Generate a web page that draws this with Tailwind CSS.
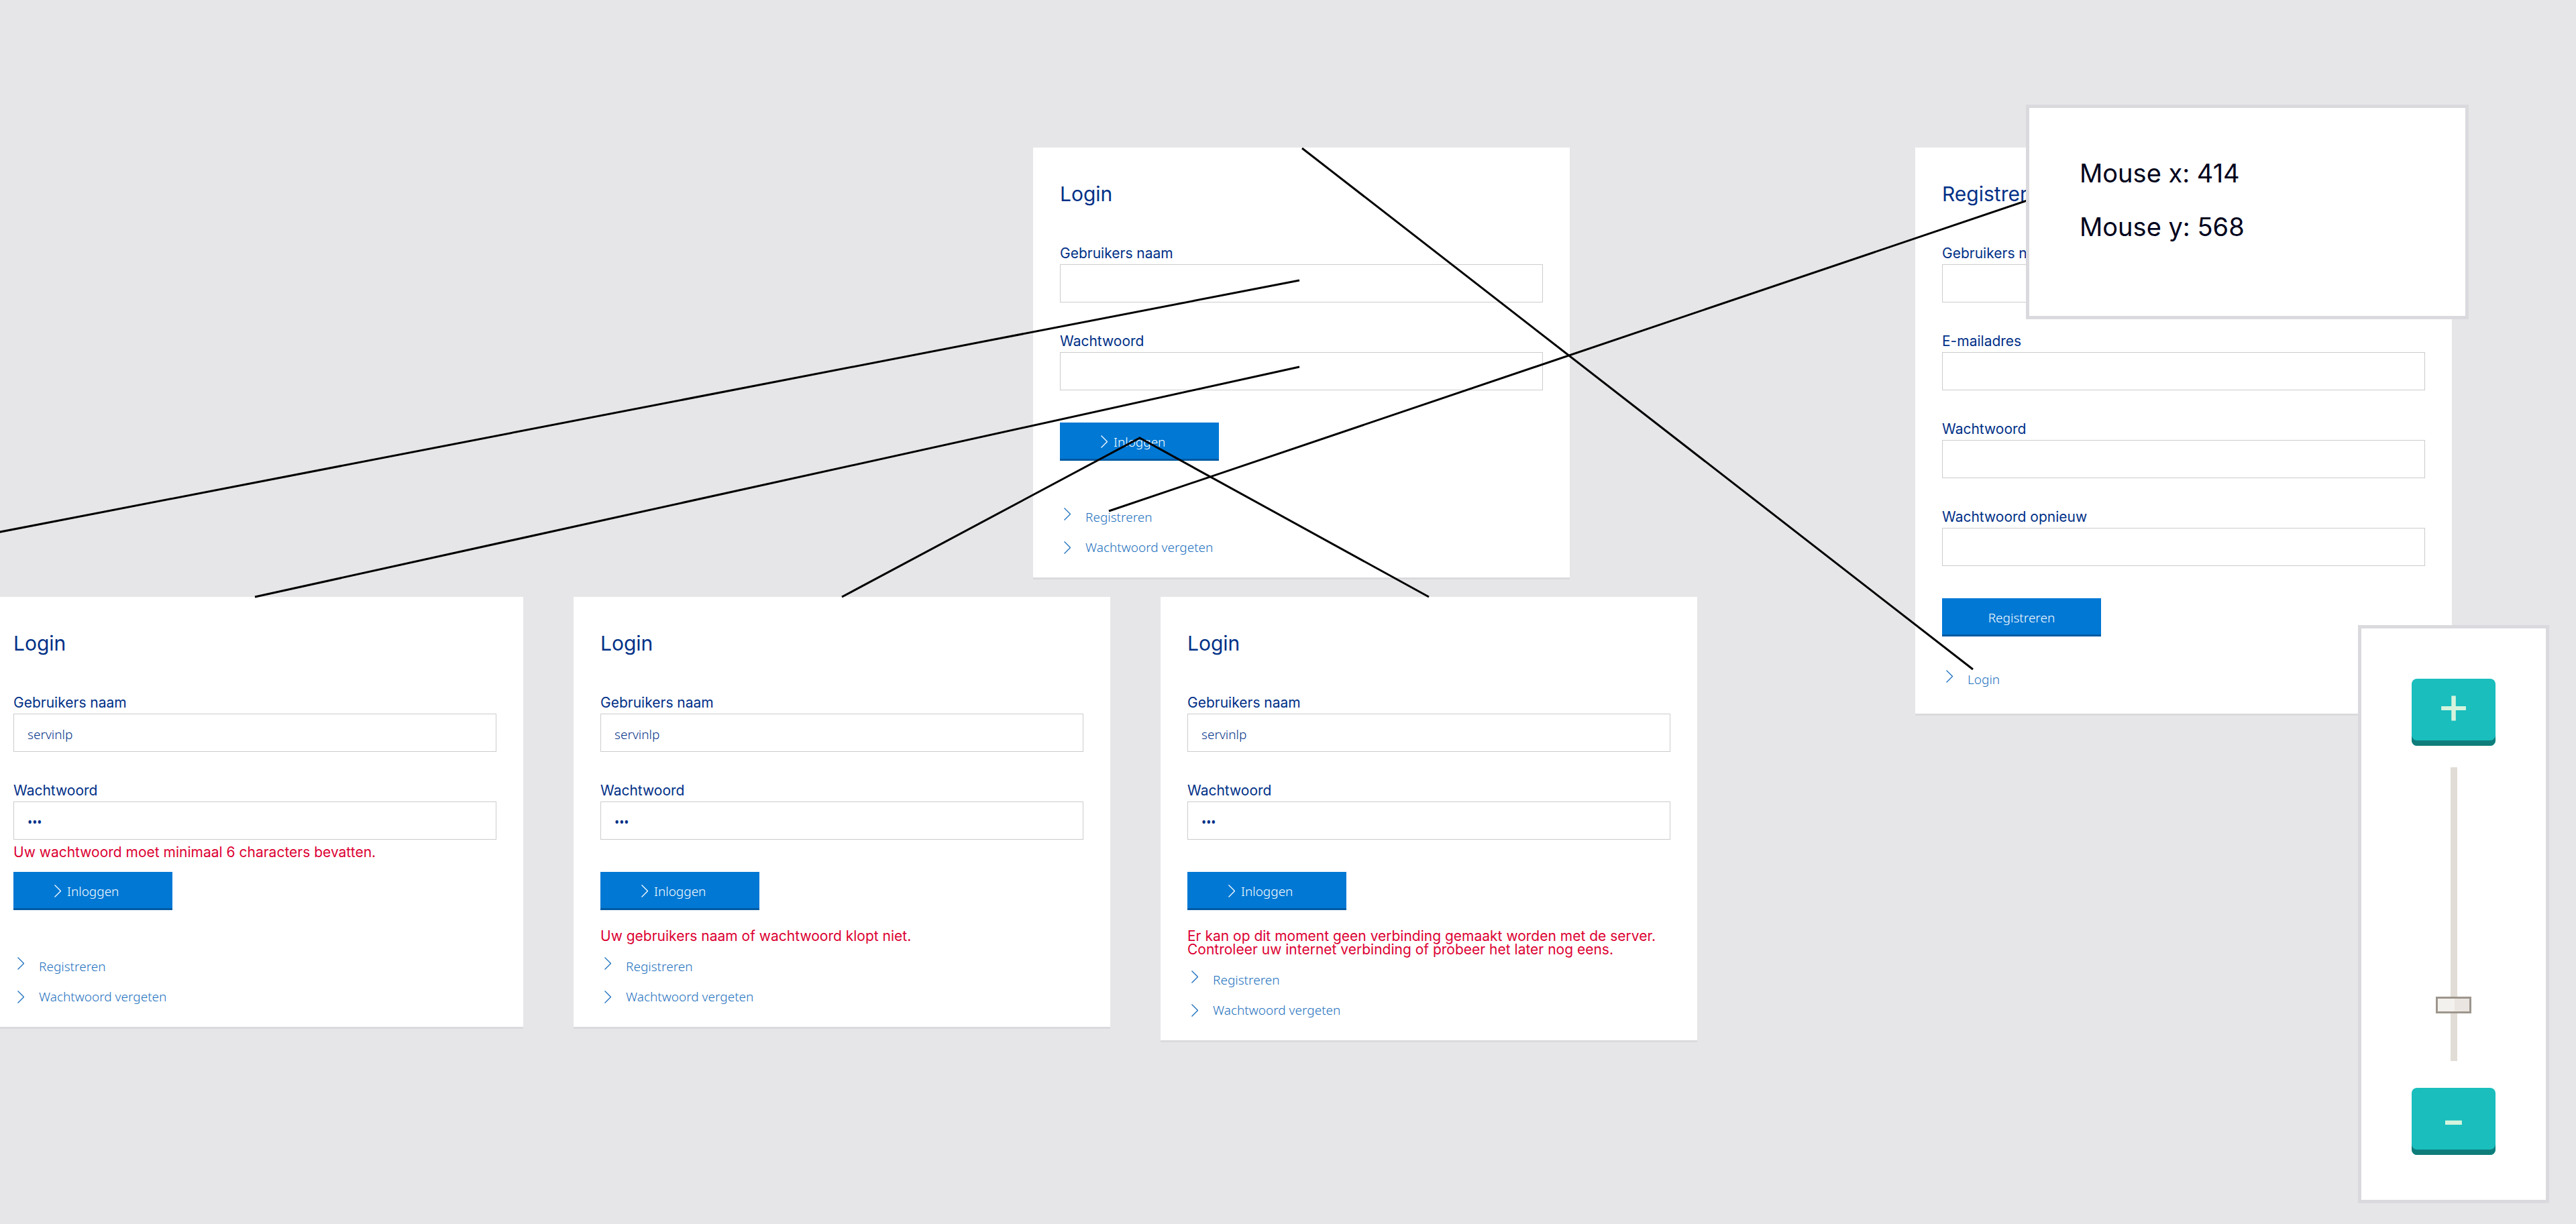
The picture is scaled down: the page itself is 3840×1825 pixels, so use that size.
<!DOCTYPE html>
<html lang="nl">
<head>
<meta charset="utf-8">
<meta name="viewport" content="width=device-width, initial-scale=1">
<title>Login flow</title>
<script src="https://cdn.jsdelivr.net/npm/@tailwindcss/browser@4"></script>
</head>
<body class="bg-[#e6e6e8]">
<svg class="hidden" aria-hidden="true">
  <symbol id="chevron" viewBox="0 0 10 19"><path d="M0.5 0.5 9.5 9.5 0.5 18.5" fill="none" stroke="currentColor" stroke-width="1.3"/></symbol>
</svg>

<main class="relative min-h-screen overflow-hidden font-[Inter,sans-serif] text-[21px] leading-5 text-[#003087]">

  <!-- Login: start screen -->
  <form class="absolute left-[1540px] top-[220px] w-[800px] bg-white px-10 pt-[51px] pb-[31px] shadow-[0_3px_0_#dadade]">
    <h2 class="mb-[61px] text-[30px] leading-9">Login</h2>
    <div class="mb-12">
      <label for="a-name" class="mb-1.5 block">Gebruikers naam</label>
      <input id="a-name" type="text" class="block h-[57px] w-full border border-[#cccccc] bg-white px-5 pt-1 font-['Noto_Sans',sans-serif] text-[19px] font-light">
    </div>
    <div class="mb-12">
      <label for="a-pass" class="mb-1.5 block">Wachtwoord</label>
      <input id="a-pass" type="password" class="block h-[57px] w-full border border-[#cccccc] bg-white px-5 pt-1 font-['Noto_Sans',sans-serif] text-[19px]">
    </div>
    <button type="button" class="flex h-[57px] w-[237px] items-center gap-[9px] bg-[#0078d4] pl-[61px] font-['Noto_Sans',sans-serif] text-[19px] leading-7 font-light text-white shadow-[inset_0_-3px_0_#005ba3]"><svg class="h-[19px] w-2.5"><use href="#chevron"/></svg>Inloggen</button>
    <p class="mt-[29px] min-h-5 text-[#dc0032]"></p>
    <ul class="mt-[21px] flex flex-col gap-[17px] font-['Noto_Sans',sans-serif] text-[19px] leading-7 font-light text-[#1c70be]">
      <li><a href="#" class="flex items-start gap-[22px] pl-1.5"><svg class="h-[19px] w-2.5"><use href="#chevron"/></svg>Registreren</a></li>
      <li><a href="#" class="flex items-center gap-[22px] pl-1.5"><svg class="h-[19px] w-2.5"><use href="#chevron"/></svg>Wachtwoord vergeten</a></li>
    </ul>
  </form>

  <!-- Login: password too short -->
  <form class="absolute left-[-20px] top-[890px] w-[800px] bg-white px-10 pt-[51px] pb-[31px] shadow-[0_3px_0_#dadade]">
    <h2 class="mb-[61px] text-[30px] leading-9">Login</h2>
    <div class="mb-12">
      <label for="b-name" class="mb-1.5 block">Gebruikers naam</label>
      <input id="b-name" type="text" value="servinlp" class="block h-[57px] w-full border border-[#cccccc] bg-white px-5 pt-1 font-['Noto_Sans',sans-serif] text-[19px] font-light">
    </div>
    <div class="mb-[19px]">
      <label for="b-pass" class="mb-1.5 block">Wachtwoord</label>
      <input id="b-pass" type="password" value="abc" class="block h-[57px] w-full border border-[#cccccc] bg-white px-5 pt-1 font-['Noto_Sans',sans-serif] text-[19px]">
      <p class="mt-[9px] text-[#dc0032]">Uw wachtwoord moet minimaal 6 characters bevatten.</p>
    </div>
    <button type="button" class="flex h-[57px] w-[237px] items-center gap-[9px] bg-[#0078d4] pl-[61px] font-['Noto_Sans',sans-serif] text-[19px] leading-7 font-light text-white shadow-[inset_0_-3px_0_#005ba3]"><svg class="h-[19px] w-2.5"><use href="#chevron"/></svg>Inloggen</button>
    <p class="mt-[29px] min-h-5 text-[#dc0032]"></p>
    <ul class="mt-[21px] flex flex-col gap-[17px] font-['Noto_Sans',sans-serif] text-[19px] leading-7 font-light text-[#1c70be]">
      <li><a href="#" class="flex items-start gap-[22px] pl-1.5"><svg class="h-[19px] w-2.5"><use href="#chevron"/></svg>Registreren</a></li>
      <li><a href="#" class="flex items-center gap-[22px] pl-1.5"><svg class="h-[19px] w-2.5"><use href="#chevron"/></svg>Wachtwoord vergeten</a></li>
    </ul>
  </form>

  <!-- Login: wrong credentials -->
  <form class="absolute left-[855px] top-[890px] w-[800px] bg-white px-10 pt-[51px] pb-[31px] shadow-[0_3px_0_#dadade]">
    <h2 class="mb-[61px] text-[30px] leading-9">Login</h2>
    <div class="mb-12">
      <label for="c-name" class="mb-1.5 block">Gebruikers naam</label>
      <input id="c-name" type="text" value="servinlp" class="block h-[57px] w-full border border-[#cccccc] bg-white px-5 pt-1 font-['Noto_Sans',sans-serif] text-[19px] font-light">
    </div>
    <div class="mb-12">
      <label for="c-pass" class="mb-1.5 block">Wachtwoord</label>
      <input id="c-pass" type="password" value="abc" class="block h-[57px] w-full border border-[#cccccc] bg-white px-5 pt-1 font-['Noto_Sans',sans-serif] text-[19px]">
    </div>
    <button type="button" class="flex h-[57px] w-[237px] items-center gap-[9px] bg-[#0078d4] pl-[61px] font-['Noto_Sans',sans-serif] text-[19px] leading-7 font-light text-white shadow-[inset_0_-3px_0_#005ba3]"><svg class="h-[19px] w-2.5"><use href="#chevron"/></svg>Inloggen</button>
    <p class="mt-[29px] min-h-5 text-[#dc0032]">Uw gebruikers naam of wachtwoord klopt niet.</p>
    <ul class="mt-[21px] flex flex-col gap-[17px] font-['Noto_Sans',sans-serif] text-[19px] leading-7 font-light text-[#1c70be]">
      <li><a href="#" class="flex items-start gap-[22px] pl-1.5"><svg class="h-[19px] w-2.5"><use href="#chevron"/></svg>Registreren</a></li>
      <li><a href="#" class="flex items-center gap-[22px] pl-1.5"><svg class="h-[19px] w-2.5"><use href="#chevron"/></svg>Wachtwoord vergeten</a></li>
    </ul>
  </form>

  <!-- Login: no connection -->
  <form class="absolute left-[1730px] top-[890px] w-[800px] bg-white px-10 pt-[51px] pb-[31px] shadow-[0_3px_0_#dadade]">
    <h2 class="mb-[61px] text-[30px] leading-9">Login</h2>
    <div class="mb-12">
      <label for="d-name" class="mb-1.5 block">Gebruikers naam</label>
      <input id="d-name" type="text" value="servinlp" class="block h-[57px] w-full border border-[#cccccc] bg-white px-5 pt-1 font-['Noto_Sans',sans-serif] text-[19px] font-light">
    </div>
    <div class="mb-12">
      <label for="d-pass" class="mb-1.5 block">Wachtwoord</label>
      <input id="d-pass" type="password" value="abc" class="block h-[57px] w-full border border-[#cccccc] bg-white px-5 pt-1 font-['Noto_Sans',sans-serif] text-[19px]">
    </div>
    <button type="button" class="flex h-[57px] w-[237px] items-center gap-[9px] bg-[#0078d4] pl-[61px] font-['Noto_Sans',sans-serif] text-[19px] leading-7 font-light text-white shadow-[inset_0_-3px_0_#005ba3]"><svg class="h-[19px] w-2.5"><use href="#chevron"/></svg>Inloggen</button>
    <p class="mt-[29px] min-h-5 text-[#dc0032]">Er kan op dit moment geen verbinding gemaakt worden met de server.<br>Controleer uw internet verbinding of probeer het later nog eens.</p>
    <ul class="mt-[21px] flex flex-col gap-[17px] font-['Noto_Sans',sans-serif] text-[19px] leading-7 font-light text-[#1c70be]">
      <li><a href="#" class="flex items-start gap-[22px] pl-1.5"><svg class="h-[19px] w-2.5"><use href="#chevron"/></svg>Registreren</a></li>
      <li><a href="#" class="flex items-center gap-[22px] pl-1.5"><svg class="h-[19px] w-2.5"><use href="#chevron"/></svg>Wachtwoord vergeten</a></li>
    </ul>
  </form>

  <!-- Register -->
  <form class="absolute left-[2855px] top-[220px] w-[800px] bg-white px-10 pt-[51px] pb-[37px] shadow-[0_3px_0_#dadade]">
    <h2 class="mb-[61px] text-[30px] leading-9">Registreren</h2>
    <div class="mb-12">
      <label for="e-name" class="mb-1.5 block">Gebruikers naam</label>
      <input id="e-name" type="text" class="block h-[57px] w-full border border-[#cccccc] bg-white px-5 pt-1">
    </div>
    <div class="mb-12">
      <label for="e-mail" class="mb-1.5 block">E-mailadres</label>
      <input id="e-mail" type="email" class="block h-[57px] w-full border border-[#cccccc] bg-white px-5 pt-1">
    </div>
    <div class="mb-12">
      <label for="e-pass" class="mb-1.5 block">Wachtwoord</label>
      <input id="e-pass" type="password" class="block h-[57px] w-full border border-[#cccccc] bg-white px-5 pt-1">
    </div>
    <div class="mb-12">
      <label for="e-pass2" class="mb-1.5 block">Wachtwoord opnieuw</label>
      <input id="e-pass2" type="password" class="block h-[57px] w-full border border-[#cccccc] bg-white px-5 pt-1">
    </div>
    <button type="button" class="flex h-[57px] w-[237px] items-center justify-center bg-[#0078d4] font-['Noto_Sans',sans-serif] text-[19px] leading-7 font-light text-white shadow-[inset_0_-3px_0_#005ba3]">Registreren</button>
    <ul class="mt-[50px] font-['Noto_Sans',sans-serif] text-[19px] leading-7 font-light text-[#1c70be]">
      <li><a href="#" class="flex items-start gap-[22px] pl-1.5"><svg class="h-[19px] w-2.5"><use href="#chevron"/></svg>Login</a></li>
    </ul>
  </form>

  <!-- Connections between the screens -->
  <svg class="pointer-events-none absolute inset-0 h-full w-full" fill="none" stroke="#000" stroke-width="3" aria-hidden="true">
    <path d="M1937 418 -495 889"/>
    <path d="M1937 547 380 890"/>
    <path d="M1255 890 1699 653 2130 890"/>
    <path d="M1653 762 3255 220"/>
    <path d="M1941 221 2941 998"/>
  </svg>

  <!-- Mouse position -->
  <section class="fixed right-40 top-[156px] flex h-80 w-[660px] flex-col gap-10 border-5 border-[#dadade] bg-white px-[75px] pt-[77px] text-[38px] leading-10 text-[#00021c]">
    <p>Mouse x: 414</p>
    <p>Mouse y: 568</p>
  </section>

  <!-- Zoom -->
  <section class="fixed right-10 bottom-[31px] flex w-[285px] flex-col items-center border-5 border-[#dadade] bg-white pt-[75px] pb-[67px] text-[78px] leading-[76px] text-[#d5f4dd]">
    <button type="button" class="flex h-[100px] w-[125px] items-start justify-center rounded-lg bg-[#19bebd] shadow-[inset_0_-8px_0_#0f7d7a]">+</button>
    <input type="range" min="0" max="413" value="71" aria-label="Zoom" class="mt-8 mb-10 block h-[438px] w-[53px] appearance-none bg-[linear-gradient(#e1ddd6,#e1ddd6)] bg-[length:10px_100%] bg-center bg-no-repeat [direction:rtl] [writing-mode:vertical-lr] [&::-webkit-slider-thumb]:box-border [&::-webkit-slider-thumb]:h-[25px] [&::-webkit-slider-thumb]:w-[53px] [&::-webkit-slider-thumb]:appearance-none [&::-webkit-slider-thumb]:border-3 [&::-webkit-slider-thumb]:border-[#9d968d] [&::-webkit-slider-thumb]:bg-[linear-gradient(90deg,#f3f1ed_53%,#eae5e0_53%)]">
    <button type="button" class="flex h-[100px] w-[125px] items-start justify-center rounded-lg bg-[#19bebd] pt-2.5 shadow-[inset_0_-8px_0_#0f7d7a]">-</button>
  </section>
</main>
</body>
</html>
